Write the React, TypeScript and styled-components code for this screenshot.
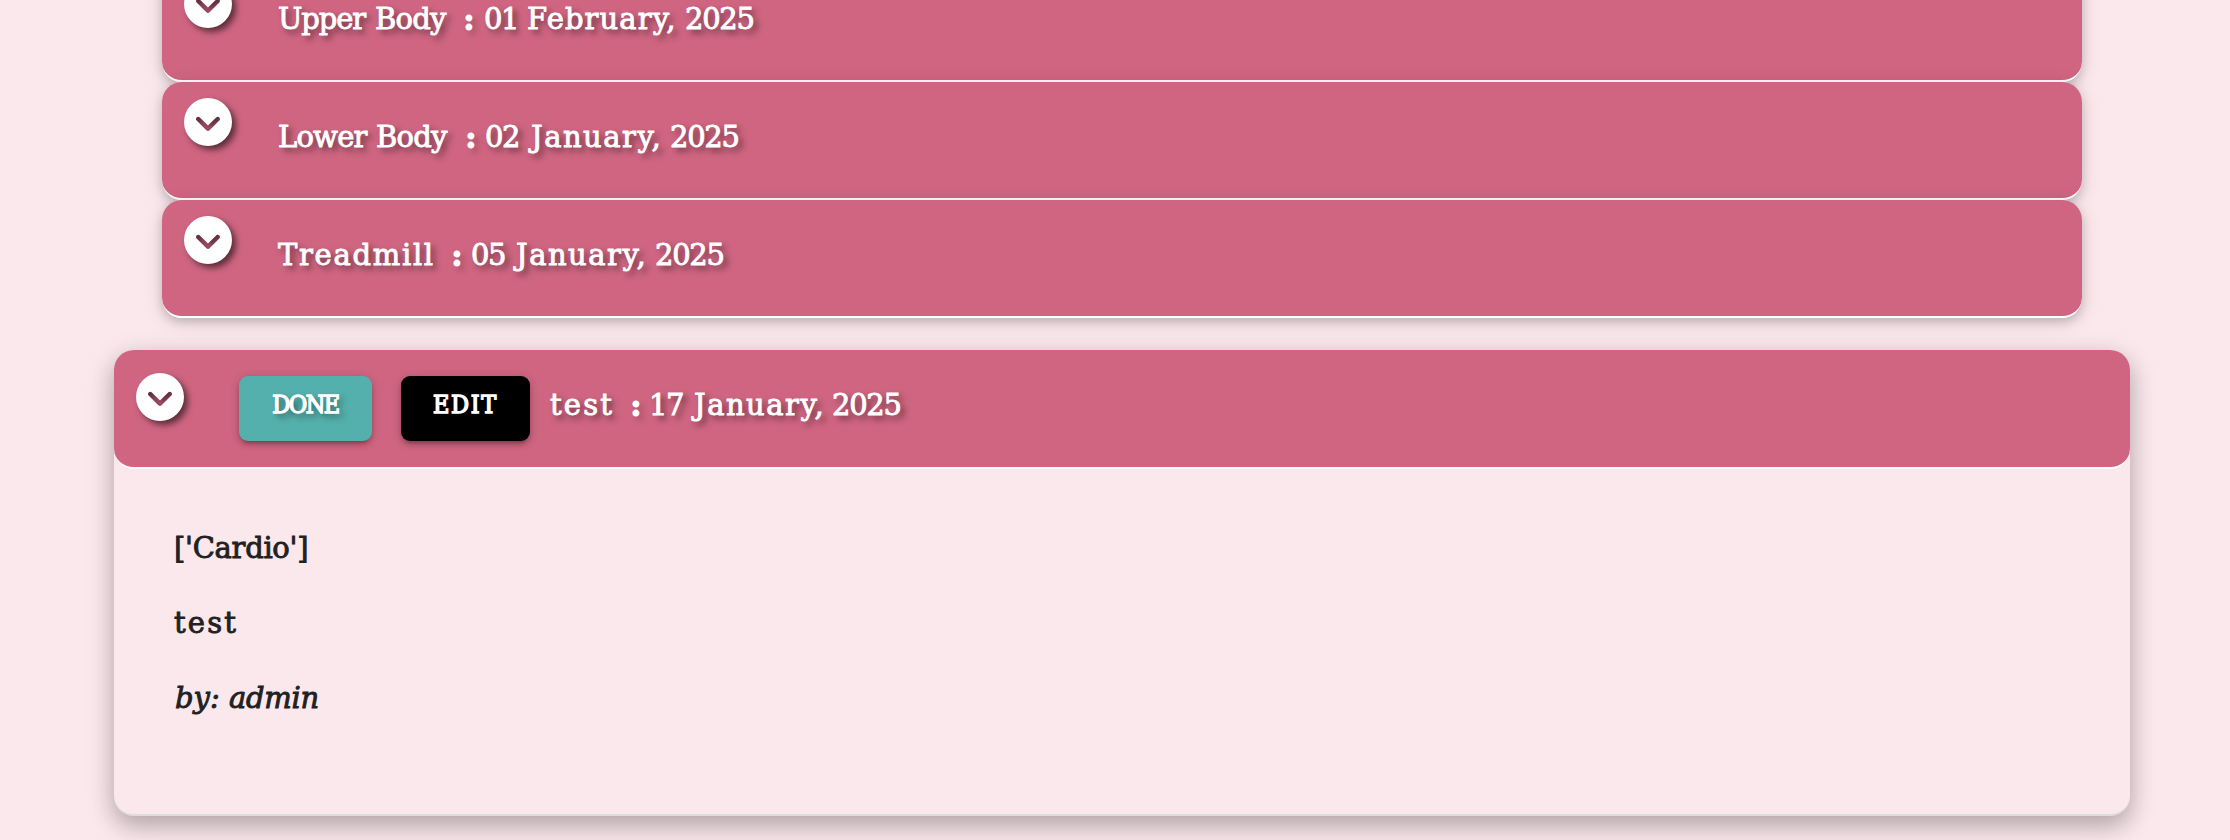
import React from "react";
import styled, { createGlobalStyle, css } from "styled-components";
import { FaCircleChevronDown } from "react-icons/fa6";

const GlobalStyle = createGlobalStyle`
  * { box-sizing: border-box; }
  html, body { margin: 0; background: #fae8ed; }
  body {
    height: 840px;
    overflow: hidden;
    color: #212121;
    font-family: "DejaVu Serif", serif;
    font-size: 29px;
  }
`;

const Page = styled.main`
  width: 2016px;
  height: 840px;
  margin-left: 114px;
`;

const List = styled.ul`
  list-style: none;
  margin: -36px 0 0;
  padding: 0;
  display: flex;
  flex-direction: column;
`;

const Item = styled.li<{ $open?: boolean }>`
  border-radius: 20px;
  ${(p) =>
    p.$open
      ? css`
          height: 466px;
          margin-top: 32px;
          background: #fae8ed;
          border-bottom: 2px solid #ddd;
          box-shadow: 0 10px 22px rgba(0, 0, 0, 0.18), 0 8px 30px rgba(0, 0, 0, 0.15);
        `
      : css`
          margin: 0 48px;
          box-shadow: 0 4px 10px rgba(0, 0, 0, 0.16), 0 4px 20px rgba(0, 0, 0, 0.12);
        `}
`;

const Header = styled.header<{ $open?: boolean }>`
  display: flex;
  align-items: flex-start;
  height: ${(p) => (p.$open ? 119 : 118)}px;
  padding-left: 22px;
  border-bottom: 2px solid #fff;
  border-radius: 20px;
  background: #cf6581;
  color: #fff;
  text-shadow: 4px 4px 6px rgba(0, 0, 0, 0.6);
`;

const Toggle = styled.span<{ $open?: boolean }>`
  display: flex;
  flex: none;
  width: 48px;
  height: 48px;
  margin-top: ${(p) => (p.$open ? 23 : 16)}px;
  filter: drop-shadow(4px 4px 3px rgba(0, 0, 0, 0.55));
`;

const Line = styled.div<{ $top: number; $left: number; $italic?: boolean }>`
  display: flex;
  margin: ${(p) => p.$top}px 0 0 ${(p) => p.$left}px;
  height: 40px;
  line-height: 40px;
  white-space: pre;
  font-style: ${(p) => (p.$italic ? "italic" : "normal")};
`;

const Term = styled.span<{ $width: number; $track: number; $heavy: boolean }>`
  flex: none;
  width: ${(p) => p.$width}px;
  letter-spacing: ${(p) => p.$track}px;
  -webkit-text-stroke: ${(p) => (p.$heavy ? 3 : 0.9)}px currentColor;
`;

const Action = styled.button<{ $tone: string; $width: number; $gap: number; $track: number }>`
  flex: none;
  width: ${(p) => p.$width}px;
  height: 65px;
  margin: 26px 0 0 ${(p) => p.$gap}px;
  padding: 0 0 8px;
  border: 0;
  border-radius: 9px;
  background: ${(p) => p.$tone};
  color: #fff;
  font: 25px "DejaVu Serif Condensed", "DejaVu Serif", serif;
  font-stretch: condensed;
  -webkit-text-stroke: 1.4px #fff;
  letter-spacing: ${(p) => p.$track}px;
  text-shadow: inherit;
  box-shadow: 0 4px 4px rgba(0, 0, 0, 0.14), 0 6px 2px -4px rgba(0, 0, 0, 0.12), 0 2px 10px rgba(0, 0, 0, 0.2);
`;

const Details = styled.div`
  padding-left: 60px;
`;

type Word = [text: string, width: number, track: number];

const entries: Word[][] = [
  [["Upper", 97, -1.1], ["Body", 89, -0.8], [":", 20, 0], ["01", 43, -1.5], ["February,", 158, 1.1], ["2025", 80, -1.3]],
  [["Lower", 98, -0.8], ["Body", 90, -0.8], [":", 19, 0], ["02", 46, -1.5], ["January,", 139, 1.5], ["2025", 80, -1.3]],
  [["Treadmill", 174, 1.7], [":", 19, 0], ["05", 45, -1.5], ["January,", 139, 1.5], ["2025", 80, -1.3]],
];
const current: Word[] = [["test", 81, 2.2], [":", 18, 0], ["17", 45, -1.5], ["January,", 138, 1.5], ["2025", 80, -1.3]];

const Words = ({ items }: { items: Word[] }) => (
  <>
    {items.map(([text, width, track], i) => (
      <Term key={i} $width={width} $track={track} $heavy={text === ":"}>
        {text}
      </Term>
    ))}
  </>
);

export default function App() {
  return (
    <Page>
      <GlobalStyle />
      <List>
        {entries.map((words, i) => (
          <Item key={i}>
            <Header>
              <Toggle>
                <FaCircleChevronDown size={48} strokeWidth={0} />
              </Toggle>
              <Line $top={35} $left={46}>
                <Words items={words} />
              </Line>
            </Header>
          </Item>
        ))}
        <Item $open>
          <Header $open>
            <Toggle $open>
              <FaCircleChevronDown size={48} strokeWidth={0} />
            </Toggle>
            <Action $tone="#54b0ac" $width={133} $gap={55} $track={-1.5}>DONE</Action>
            <Action $tone="#000" $width={129} $gap={29} $track={1.7}>EDIT</Action>
            <Line $top={35} $left={20}>
              <Words items={current} />
            </Line>
          </Header>
          <Details>
            <Line $top={59} $left={0}>
              <Words items={[["['Cardio']", 140, -0.3]]} />
            </Line>
            <Line $top={35} $left={0}>
              <Words items={[["test", 80, 2.2]]} />
            </Line>
            <Line $top={35} $left={1} $italic>
              <Words items={[["by:", 54, 0], ["admin", 100, -0.3]]} />
            </Line>
          </Details>
        </Item>
      </List>
    </Page>
  );
}
